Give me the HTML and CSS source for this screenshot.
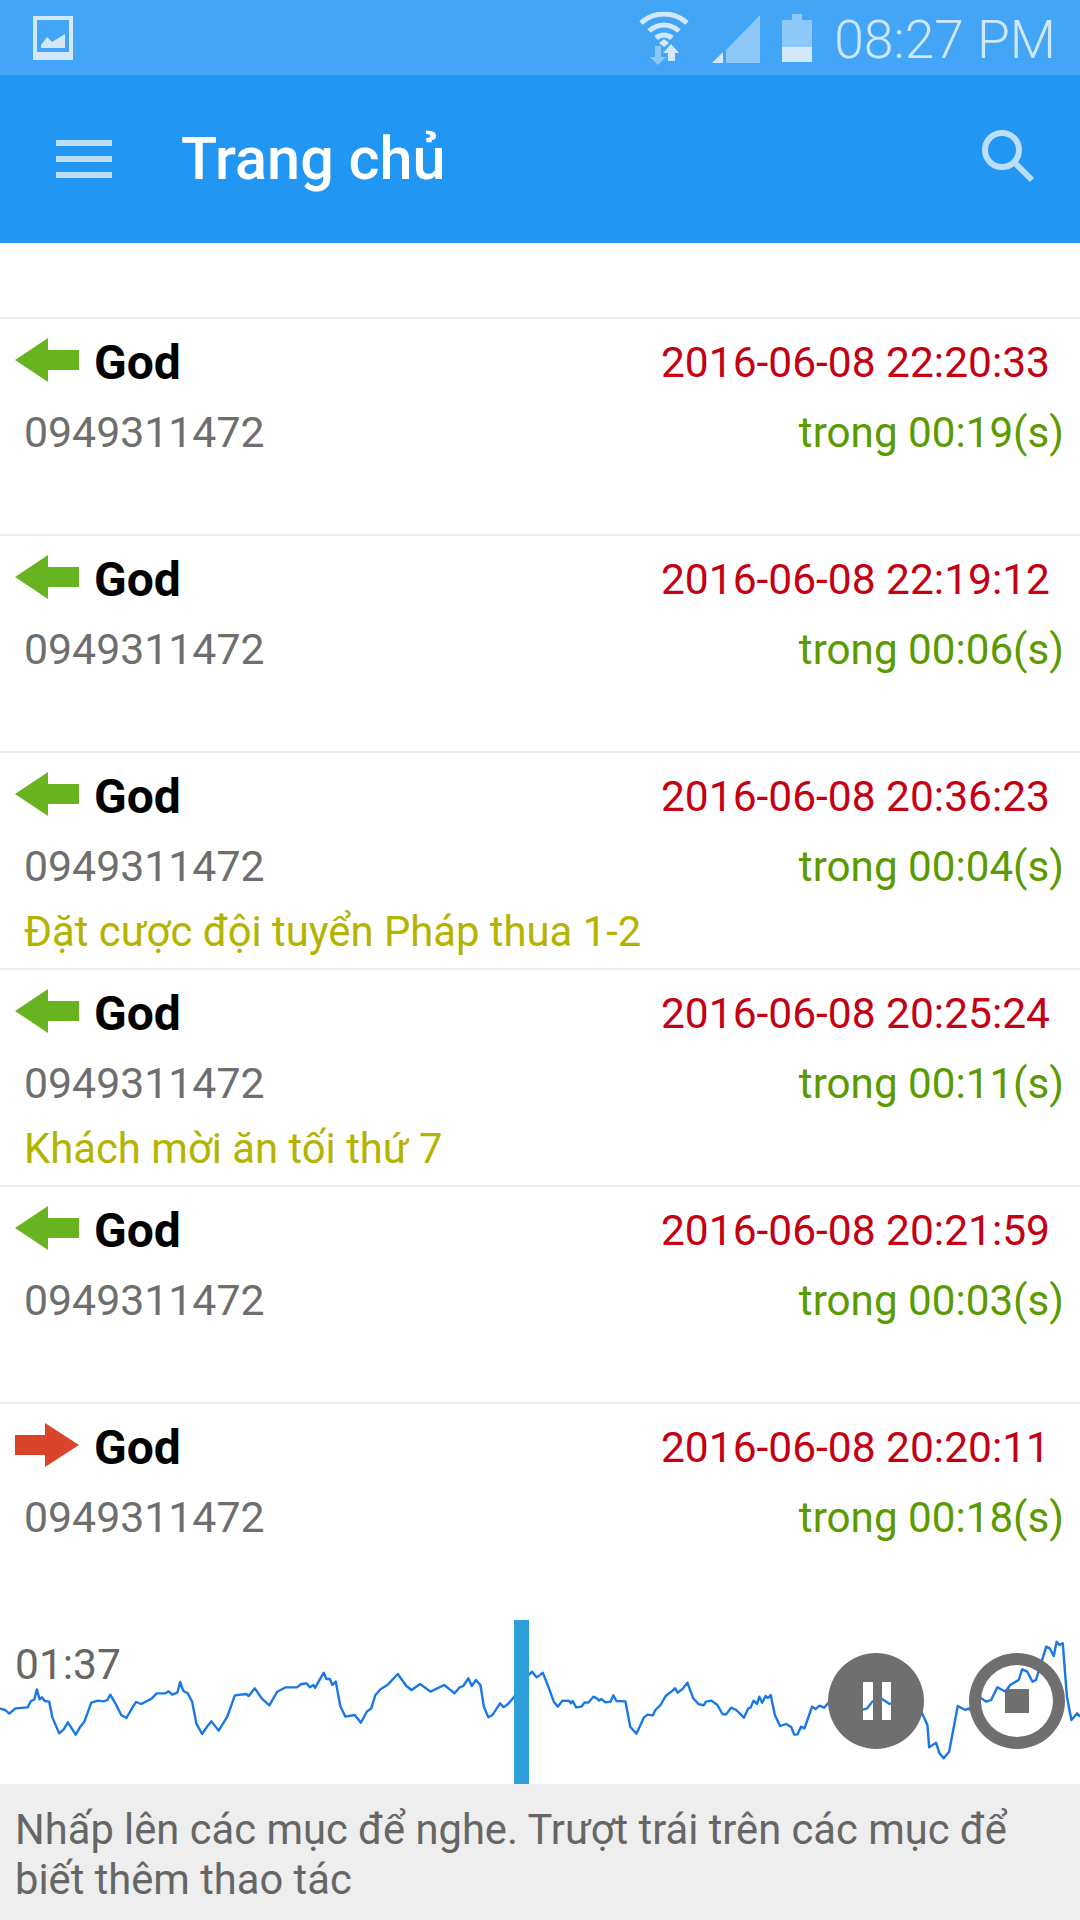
FILE: index.html
```html
<!DOCTYPE html>
<html>
<head>
  <title>Trang chủ</title>
  <link rel="stylesheet" href="styles.css">
</head>
<body>
  <div class="app">
    <div class="status-bar">
      <svg class="status-photo" width="40" height="44" viewBox="0 0 40 44">
        <path fill-rule="evenodd" d="M0 0H40V44H0ZM4 4V36H36V4Z"/>
        <path d="M8 32L8 29L14 21L19 26L32 18V32Z"/>
      </svg>
      <div class="status-right">
        <svg class="status-wifi" width="52" height="54" viewBox="0 0 52 54">
          <path class="wifi-arc" d="M3 11C16 -1 36 -1 49 11"/>
          <path class="wifi-arc" d="M11 19C20 11 32 11 41 19"/>
          <path class="wifi-arc" d="M18 26C23 22 29 22 34 26"/>
          <path class="wifi-dot" d="M26 27L31 31L26 35L21 31Z"/>
          <path class="wifi-down" d="M17 34H23V45H28L20 53L12 45H17Z"/>
          <path class="wifi-up" d="M33 32L41 41H37V49H30V41H25Z"/>
        </svg>
        <svg class="status-signal" width="49" height="49" viewBox="0 0 49 49">
          <path class="signal-empty" d="M14 49V36L48 1V49Z"/>
          <path class="signal-full" d="M0 49L11 38V49Z"/>
        </svg>
        <svg class="status-battery" width="30" height="49" viewBox="0 0 30 49">
          <path class="battery-empty" d="M10 0H20V6H30V33H0V6H10Z"/>
          <path class="battery-full" d="M0 33H30V48H0Z"/>
        </svg>
        <span class="status-time">08:27 PM</span>
      </div>
    </div>

    <div class="app-bar">
      <div class="menu-icon"><span></span><span></span><span></span></div>
      <div class="app-title">Trang chủ</div>
      <svg class="search-icon" width="58" height="58" viewBox="0 0 58 58">
        <circle cx="22" cy="22" r="17"/>
        <path d="M34 34L52 52"/>
      </svg>
    </div>

    <div class="list">
      <div class="row">
        <div class="row-name">
          <svg class="arrow" width="64" height="44" viewBox="0 0 64 44"><path class="arrow-in" d="M0 22L33 0V12H64V32H33V44Z"/></svg>
          <span class="name">God</span>
        </div>
        <div class="date">2016-06-08 22:20:33</div>
        <div class="phone">0949311472</div>
        <div class="duration">trong 00:19(s)</div>
      </div>
      <div class="row">
        <div class="row-name">
          <svg class="arrow" width="64" height="44" viewBox="0 0 64 44"><path class="arrow-in" d="M0 22L33 0V12H64V32H33V44Z"/></svg>
          <span class="name">God</span>
        </div>
        <div class="date">2016-06-08 22:19:12</div>
        <div class="phone">0949311472</div>
        <div class="duration">trong 00:06(s)</div>
      </div>
      <div class="row">
        <div class="row-name">
          <svg class="arrow" width="64" height="44" viewBox="0 0 64 44"><path class="arrow-in" d="M0 22L33 0V12H64V32H33V44Z"/></svg>
          <span class="name">God</span>
        </div>
        <div class="date">2016-06-08 20:36:23</div>
        <div class="phone">0949311472</div>
        <div class="duration">trong 00:04(s)</div>
        <div class="note">Đặt cược đội tuyển Pháp thua 1-2</div>
      </div>
      <div class="row">
        <div class="row-name">
          <svg class="arrow" width="64" height="44" viewBox="0 0 64 44"><path class="arrow-in" d="M0 22L33 0V12H64V32H33V44Z"/></svg>
          <span class="name">God</span>
        </div>
        <div class="date">2016-06-08 20:25:24</div>
        <div class="phone">0949311472</div>
        <div class="duration">trong 00:11(s)</div>
        <div class="note">Khách mời ăn tối thứ 7</div>
      </div>
      <div class="row">
        <div class="row-name">
          <svg class="arrow" width="64" height="44" viewBox="0 0 64 44"><path class="arrow-in" d="M0 22L33 0V12H64V32H33V44Z"/></svg>
          <span class="name">God</span>
        </div>
        <div class="date">2016-06-08 20:21:59</div>
        <div class="phone">0949311472</div>
        <div class="duration">trong 00:03(s)</div>
      </div>
      <div class="row">
        <div class="row-name">
          <svg class="arrow" width="64" height="44" viewBox="0 0 64 44"><path class="arrow-out" d="M64 22L30 0V12H0V32H30V44Z"/></svg>
          <span class="name">God</span>
        </div>
        <div class="date">2016-06-08 20:20:11</div>
        <div class="phone">0949311472</div>
        <div class="duration">trong 00:18(s)</div>
      </div>
    </div>

    <div class="player">
      <span class="player-time">01:37</span>
      <svg class="wave" viewBox="0 60 3136 492" preserveAspectRatio="none">
        <path d="M0 326L15 330L27 341L45 325L80 322L90 303L100 298L107 268L115 298L122 292L130 303L143 305L152 352L172 400L185 388L197 367L220 404L232 382L245 365L265 308L285 302L300 304L312 300L320 284L335 310L352 345L367 354L385 322L395 306L410 312L440 296L455 280L480 280L490 274L500 284L515 278L523 246L532 272L545 280L558 305L570 370L587 402L600 382L614 364L635 392L660 350L682 286L715 282L722 288L740 265L760 295L782 316L805 275L830 262L862 262L875 252L890 250L900 262L910 255L915 264L925 245L940 218L948 237L958 237L965 255L975 245L988 318L1003 350L1030 345L1048 368L1065 335L1078 325L1090 285L1105 268L1125 255L1155 222L1180 258L1195 270L1220 252L1250 275L1290 255L1320 280L1335 262L1345 258L1360 235L1370 258L1382 240L1395 255L1405 320L1418 352L1430 345L1452 310L1462 322L1475 312L1492 292L1535 225L1545 215L1558 232L1568 225"/>
        <path transform="translate(1568 0)" d="M0 225L8 218L25 262L40 305L52 320L65 302L85 303L90 310L95 303L105 322L120 320L130 307L140 308L155 290L165 295L172 302L178 297L190 307L205 305L213 286L222 303L248 304L262 380L280 401L302 352L312 344L328 346L335 330L350 315L365 288L385 272L392 265L400 278L415 266L428 248L445 295L460 312L475 316L482 305L498 302L515 315L530 342L540 344L555 323L570 330L592 353L605 325L612 322L620 302L630 312L637 290L645 308L655 288L662 294L670 285L682 345L697 378L715 372L730 382L738 404L748 403L758 380L768 385L790 320L800 327L812 317L825 323L840 305L850 300L900 325L935 330L950 325L965 305L990 295L1015 312L1050 300L1085 310L1105 330L1125 375L1130 442L1150 428L1160 460L1172 475L1188 455L1213 318L1235 330L1245 325L1260 340L1275 290L1295 305L1310 300L1328 262L1352 275L1365 255L1390 240L1400 208L1415 215L1430 245L1440 240L1470 140L1480 145L1492 168L1500 125L1508 135L1518 130L1530 290L1543 360L1560 340L1568 350"/>
      </svg>
      <div class="seek-bar"></div>
      <svg class="btn-pause" width="96" height="96" viewBox="0 0 96 96">
        <path fill-rule="evenodd" d="M48 0A48 48 0 1 1 48 96A48 48 0 1 1 48 0ZM35 29V67H45V29ZM54 29V67H63V29Z"/>
      </svg>
      <svg class="btn-stop" width="96" height="96" viewBox="0 0 96 96">
        <path fill-rule="evenodd" d="M48 0A48 48 0 1 1 48 96A48 48 0 1 1 48 0ZM48 12A36 36 0 1 0 48 84A36 36 0 1 0 48 12Z"/>
        <rect x="36" y="36" width="24" height="24"/>
      </svg>
    </div>

    <div class="hint">Nhấp lên các mục để nghe. Trượt trái trên các mục để biết thêm thao tác</div>
  </div>
</body>
</html>
```

FILE: styles.css
```css
* {
  box-sizing: border-box;
}

body {
  margin: 0;
  background-color: white;
  font-family: Roboto, "Liberation Sans", sans-serif;
}

.app {
  width: 1080px;
  height: 1920px;
  display: flex;
  flex-direction: column;
  overflow: hidden;
}

/* status bar */
.status-bar {
  height: 75px;
  background-color: #42a5f5;
  display: flex;
  justify-content: space-between;
  align-items: center;
  padding: 0 24px 0 33px;
}

.status-photo {
  fill: #d3e9fb;
  margin-top: 1px;
}

.status-right {
  display: flex;
  align-items: center;
}

.status-wifi {
  margin-right: 22px;
  margin-top: 2px;
}

.wifi-arc {
  fill: none;
  stroke: #d3e9fb;
  stroke-width: 5;
}

.wifi-dot,
.wifi-up {
  fill: #d3e9fb;
}

.wifi-down {
  fill: #8ec8f8;
}

.status-signal {
  margin-right: 21px;
  margin-top: 2px;
}

.signal-empty,
.battery-empty {
  fill: #8ec8f8;
}

.signal-full,
.battery-full {
  fill: #d3e9fb;
}

.status-battery {
  margin-right: 22px;
  margin-top: 1px;
}

.status-time {
  font-size: 53.4px;
  font-weight: 300;
  color: #cfe7fb;
  line-height: 60px;
  padding-top: 4px;
}

/* app bar */
.app-bar {
  height: 168px;
  background-color: #2196f3;
  display: flex;
  align-items: center;
  padding: 0 42px 0 56px;
}

.menu-icon {
  width: 56px;
  display: flex;
  flex-direction: column;
  gap: 10px;
  margin-right: 69px;
}

.menu-icon span {
  height: 6px;
  background-color: #bbdefb;
}

.app-title {
  flex: 1;
  font-size: 59.4px;
  font-weight: 500;
  color: white;
}

.search-icon {
  fill: none;
  stroke: #bbdefb;
  stroke-width: 6;
  margin-top: -4px;
}

/* list */
.list {
  flex: 1;
  padding-top: 74px;
}

.row {
  height: 217px;
  border-top: 2px solid #eeeeee;
  display: grid;
  grid-template-columns: 1fr auto;
  grid-template-rows: 70px 70px auto;
  padding: 8px 0 0 15px;
}

.row-name {
  display: flex;
  align-items: center;
}

.arrow {
  margin-right: 15px;
  margin-top: -4px;
}

.arrow-in {
  fill: #68b420;
}

.arrow-out {
  fill: #d9452b;
}

.name {
  font-size: 48px;
  font-weight: 700;
  color: black;
}

.date {
  font-size: 42.5px;
  color: #c40012;
  padding-right: 30px;
  align-self: center;
  justify-self: end;
}

.phone {
  font-size: 42.8px;
  color: #6e6e6e;
  padding-left: 9px;
  align-self: center;
}

.duration {
  font-size: 42.2px;
  color: #5b9a00;
  padding-right: 16px;
  align-self: center;
  justify-self: end;
}

.note {
  grid-column: 1 / 3;
  font-size: 41.8px;
  color: #b3b300;
  padding-left: 9px;
  line-height: 62px;
}

/* player */
.player {
  height: 164px;
  position: relative;
  padding: 20px 0 0 15px;
  flex-shrink: 0;
}

.player-time {
  font-size: 42.5px;
  color: #666666;
  position: relative;
  z-index: 1;
}

.wave {
  position: absolute;
  left: 0;
  top: 0;
  width: 1080px;
  height: 164px;
  fill: none;
  stroke: #1a78e6;
  stroke-width: 7;
  stroke-linejoin: round;
}

.seek-bar {
  position: absolute;
  left: 514px;
  top: 0;
  width: 15px;
  height: 164px;
  background-color: #2f9fdc;
}

.btn-pause,
.btn-stop {
  position: absolute;
  top: 33px;
  fill: #6f6f6f;
}

.btn-pause {
  left: 828px;
}

.btn-stop {
  left: 969px;
}

/* hint */
.hint {
  height: 136px;
  flex-shrink: 0;
  background-color: #eeeeee;
  color: #666666;
  font-size: 41.7px;
  line-height: 50px;
  padding: 21px 40px 0 15px;
}
```
